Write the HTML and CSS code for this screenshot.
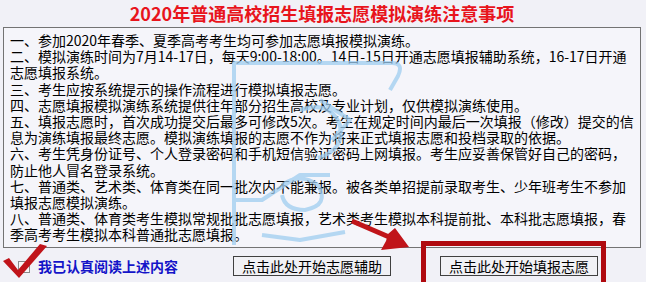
FILE: index.html
```html
<!DOCTYPE html>
<html>

<head>
    <title>模拟演练注意事项</title>
    <meta charset='utf-8'>
    <meta name='viewport' content='width=device-width'>
    <link rel="stylesheet" href="styles.css">
</head>

<body>
    <div class='page'>
        <h1 class='title'>2020年普通高校招生填报志愿模拟演练注意事项</h1>
        <div class='notice'>
            <p>一、参加2020年春季、夏季高考考生均可参加志愿填报模拟演练。</p>
            <p>二、模拟演练时间为7月14-17日，每天9:00-18:00。14日-15日开通志愿填报辅助系统，16-17日开通<br />志愿填报系统。</p>
            <p>三、考生应按系统提示的操作流程进行模拟填报志愿。</p>
            <p>四、志愿填报模拟演练系统提供往年部分招生高校及专业计划，仅供模拟演练使用。</p>
            <p>五、填报志愿时，首次成功提交后最多可修改5次。考生在规定时间内最后一次填报（修改）提交的信<br />息为演练填报最终志愿。模拟演练填报的志愿不作为将来正式填报志愿和投档录取的依据。</p>
            <p>六、考生凭身份证号、个人登录密码和手机短信验证密码上网填报。考生应妥善保管好自己的密码，<br />防止他人冒名登录系统。</p>
            <p>七、普通类、艺术类、体育类在同一批次内不能兼报。被各类单招提前录取考生、少年班考生不参加<br />填报志愿模拟演练。</p>
            <p>八、普通类、体育类考生模拟常规批批志愿填报，艺术类考生模拟本科提前批、本科批志愿填报，春<br />季高考考生模拟本科普通批志愿填报。</p>
        </div>
        <div class='actions'>
            <label class='agree'><span class='checkbox'></span><span class='agree-text'>我已认真阅读上述内容</span></label>
            <button class='btn'>点击此处开始志愿辅助</button>
            <button class='btn btn-fill'>点击此处开始填报志愿</button>
        </div>

        <!-- watermark + red annotations drawn over the page -->
        <svg class='overlay' width='646' height='282' viewBox='0 0 646 282'>
            <g class='wm' fill='none' stroke='#9fcdf0' stroke-width='4' stroke-linejoin='round'>
                <path d='M234 245 V63 H392 Q404 63 398 76 L390 90' />
                <path d='M320 100 L350 120 L332 140' />
                <path d='M234 200 H262 L300 175 H330' />
                <path d='M300 110 Q330 100 340 125 Q345 150 318 158' />
                <path d='M282 185 Q300 172 318 185 Q330 205 305 210 Q285 210 282 195' />
                <path d='M262 235 L300 240 L345 232' />
            </g>
            <polygon class='mark' points='3,261 9,258 18,270 40,244 47,246 19,278' />
            <path class='mark-line' d='M352 221 L396 240' />
            <polygon class='mark' points='409,247 381,250 386,241 388,234 395,228' />
            <rect class='frame' x='423.5' y='243.5' width='180' height='48' />
        </svg>
    </div>
</body>

</html>
```

FILE: styles.css
```css
body {
    margin: 0;
    background: #f1f1f7;
    font-family: "Noto Sans CJK SC", "Noto Sans", sans-serif;
    color: #000;
}

.page {
    position: relative;
    width: 638px;
    height: 282px;
    padding: 0 5px 0 3px;
    overflow: hidden;
}

.title {
    margin: 0;
    height: 27px;
    line-height: 26px;
    font-size: 18px;
    font-weight: bold;
    text-align: center;
    color: #e8141c;
}

.notice {
    border: 1px solid #737373;
    background: #f5f5fa;
    padding: 4px 6px;
    font-size: 14px;
    line-height: 16.2px;
    white-space: nowrap;
}

.notice p {
    margin: 0;
}

.actions {
    display: flex;
    align-items: center;
    padding-top: 8px;
}

.agree {
    display: flex;
    align-items: center;
    width: 215px;
    padding-left: 15px;
}

.checkbox {
    width: 10px;
    height: 10px;
    border: 1px solid #8a8a8a;
    background: #f8f8f8;
    margin-top: 2px;
}

.agree-text {
    margin-left: 8px;
    font-size: 14px;
    font-weight: bold;
    color: #1414c8;
}

.btn {
    width: 158px;
    height: 20px;
    padding: 0;
    border: 1px solid #404040;
    background: #f1f1f5;
    font-family: "Noto Sans CJK SC", sans-serif;
    font-size: 14px;
    line-height: 18px;
    color: #000;
}

.btn-fill {
    margin-left: 49px;
}

.overlay {
    position: absolute;
    left: 0;
    top: 0;
    pointer-events: none;
}

.wm {
    opacity: 0.75;
}

.mark {
    fill: #c0141a;
}

.mark-line {
    stroke: #c0141a;
    stroke-width: 5;
    fill: none;
}

.frame {
    fill: none;
    stroke: #b00a0f;
    stroke-width: 5;
}
```
